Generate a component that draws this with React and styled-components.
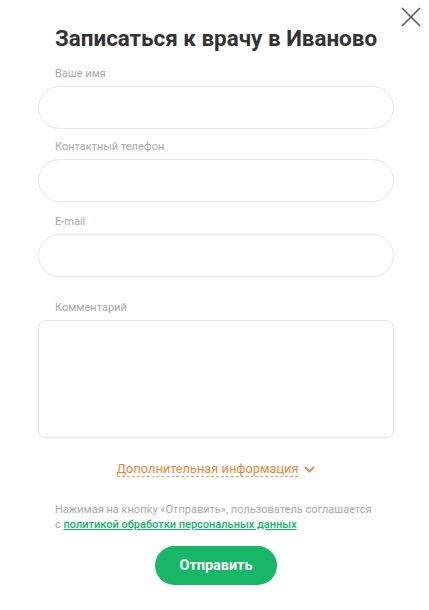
import React from 'react';
import styled, { createGlobalStyle } from 'styled-components';

const GlobalStyle = createGlobalStyle`
	* {
		box-sizing: border-box;
	}
	body {
		margin: 0;
		background: #fff;
		font-family: Roboto, "Liberation Sans", Arial, sans-serif;
	}
`;

const Modal = styled.div`
	position: relative;
	width: 429px;
	height: 610px;
	padding: 25px 35px 0 38px;
	background: #fff;
`;

const Close = styled.button`
	position: absolute;
	top: 6px;
	right: 7px;
	width: 22px;
	height: 22px;
	padding: 0;
	border: none;
	background: transparent;
	cursor: pointer;
	display: flex;
`;

const Title = styled.h2`
	margin: 0 0 16px;
	font-size: 22.4px;
	line-height: 26px;
	font-weight: 700;
	color: #333;
	text-align: center;
`;

const Field = styled.div`
	display: flex;
	flex-direction: column;
	margin-top: ${(p) => p.$gap || 0}px;
`;

const Label = styled.label`
	padding-left: 17px;
	margin-bottom: 5px;
	font-size: 11px;
	line-height: 14px;
	color: #a9a9a9;
`;

const Input = styled.input`
	width: 100%;
	height: 43px;
	padding: 0 17px;
	border: 1px solid #e6e6e6;
	border-radius: 22px;
	font: inherit;
	font-size: 14px;
	outline: none;
`;

const Textarea = styled.textarea`
	width: 100%;
	height: 118px;
	padding: 12px 17px;
	border: 1px solid #e6e6e6;
	border-radius: 8px;
	font: inherit;
	font-size: 14px;
	resize: none;
	outline: none;
`;

const More = styled.div`
	display: flex;
	justify-content: center;
	align-items: center;
	gap: 6px;
	margin-top: 23px;
	color: #f0873a;
	font-size: 12.8px;
	line-height: 18px;
`;

const MoreText = styled.span`
	border-bottom: 1px dashed #f0a060;
	line-height: 15px;
`;

const Policy = styled.p`
	margin: 25px 0 0;
	padding-left: 17px;
	font-size: 11px;
	line-height: 15px;
	color: #a9a9a9;
`;

const PolicyLink = styled.a`
	color: #14b36b;
	font-weight: 500;
	text-decoration: underline;
`;

const Submit = styled.button`
	display: block;
	width: 122px;
	height: 39px;
	margin: 14px auto 0;
	border: none;
	border-radius: 20px;
	background: #17b767;
	color: #fff;
	font: inherit;
	font-size: 14.4px;
	font-weight: 700;
	cursor: pointer;
`;

export default function App() {
	return (
		<>
			<GlobalStyle />
			<Modal>
				<Close aria-label="Закрыть">
					<svg width="22" height="22" viewBox="0 0 22 22">
						<path d="M2 2L20 20M20 2L2 20" stroke="#555" strokeWidth="1.5" fill="none" />
					</svg>
				</Close>
				<Title>Записаться к врачу в Иваново</Title>
				<Field>
					<Label>Ваше имя</Label>
					<Input />
				</Field>
				<Field $gap={11}>
					<Label>Контактный телефон</Label>
					<Input />
				</Field>
				<Field $gap={13}>
					<Label>E-mail</Label>
					<Input />
				</Field>
				<Field $gap={24}>
					<Label>Комментарий</Label>
					<Textarea />
				</Field>
				<More>
					<MoreText>Дополнительная информация</MoreText>
					<svg width="11" height="7" viewBox="0 0 11 7">
						<path d="M1 1L5.5 5.5L10 1" stroke="#f0873a" strokeWidth="1.8" fill="none" />
					</svg>
				</More>
				<Policy>
					Нажимая на кнопку «Отправить», пользователь соглашается
					<br />с <PolicyLink href="#">политикой обработки персональных данных</PolicyLink>
				</Policy>
				<Submit>Отправить</Submit>
			</Modal>
		</>
	);
}
